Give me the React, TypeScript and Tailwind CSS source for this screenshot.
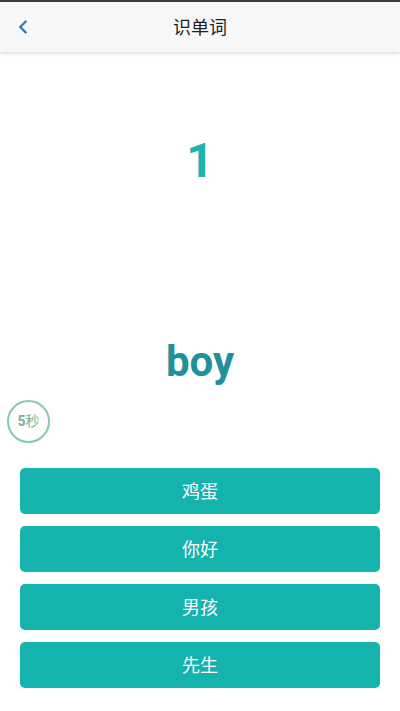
import { ChevronLeft } from 'lucide-react'

const options = ['鸡蛋', '你好', '男孩', '先生']

export default function App() {
  return (
    <div
      className="relative flex h-[711px] w-[400px] flex-col overflow-hidden bg-white"
      style={{ fontFamily: 'Roboto, "Noto Sans CJK SC", sans-serif' }}
    >
      <div className="h-[2px] bg-[#3a3a3a]" />
      <header className="relative z-10 flex h-[50px] items-center bg-[#f7f7f7] shadow-[0_2px_3px_rgba(0,0,0,0.12)]">
        <button className="flex h-full w-[48px] items-center justify-center text-[#2b78b8]">
          <ChevronLeft className="ml-[-2px] h-[22px] w-[22px]" strokeWidth={2.5} />
        </button>
        <h1 className="absolute left-1/2 -translate-x-1/2 text-[18px] text-[#222]">识单词</h1>
      </header>

      <div className="mt-[81px] flex justify-center">
        <span className="text-[48px] font-bold leading-[56px] text-[#1db3ae]">1</span>
      </div>

      <div className="mt-[148px] flex justify-center">
        <span className="text-[42px] font-bold leading-[50px] text-[#22909b]">boy</span>
      </div>

      <div className="ml-[7px] mt-[13px] flex h-[43px] w-[43px] items-center justify-center rounded-full border-2 border-[#86c9ab]">
        <span className="text-[14px] font-bold text-[#72b394]">
          5<span className="font-normal">秒</span>
        </span>
      </div>

      <div className="mt-[25px] flex flex-col gap-[12px] px-[20px]">
        {options.map((o) => (
          <button
            key={o}
            className="flex h-[46px] items-center justify-center rounded-[5px] bg-[#15b3ae] text-[18px] text-white"
          >
            {o}
          </button>
        ))}
      </div>
    </div>
  )
}
